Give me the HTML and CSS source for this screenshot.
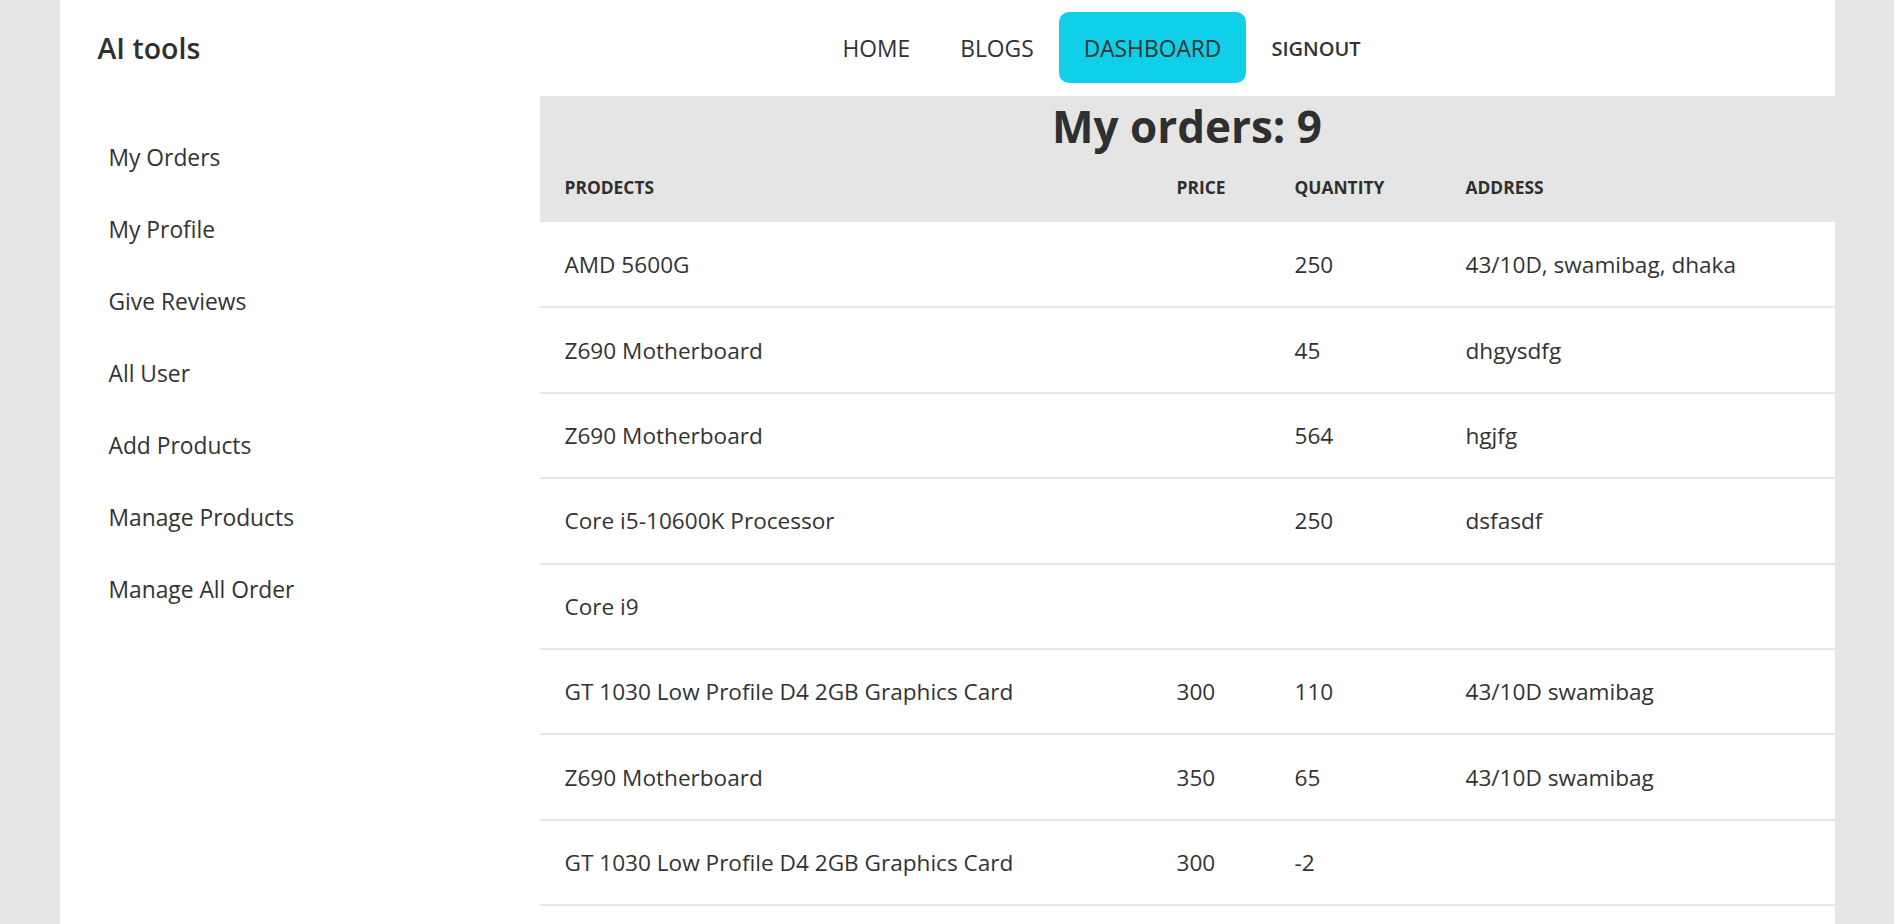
FILE: index.html
```html
<!DOCTYPE html>
<html lang="en">
<head>
<meta charset="utf-8">
<title>AI tools - Dashboard</title>
<link rel="stylesheet" href="styles.css">
</head>
<body>
<div class="page">
  <header class="topbar">
    <div class="brand">AI tools</div>
    <nav class="nav">
      <a class="nav-link" href="#">HOME</a>
      <a class="nav-link" href="#">BLOGS</a>
      <a class="nav-link active" href="#">DASHBOARD</a>
      <a class="nav-link signout" href="#">SIGNOUT</a>
    </nav>
  </header>
  <div class="layout">
    <aside class="sidebar">
      <ul class="side-menu">
        <li><a href="#">My Orders</a></li>
        <li><a href="#">My Profile</a></li>
        <li><a href="#">Give Reviews</a></li>
        <li><a href="#">All User</a></li>
        <li><a href="#">Add Products</a></li>
        <li><a href="#">Manage Products</a></li>
        <li><a href="#">Manage All Order</a></li>
      </ul>
    </aside>
    <main class="main">
      <div class="orders-head">
        <h1 class="orders-title">My orders: 9</h1>
      </div>
      <table class="orders">
        <thead>
          <tr>
            <th class="col-product">PRODECTS</th>
            <th class="col-price">PRICE</th>
            <th class="col-qty">QUANTITY</th>
            <th class="col-address">ADDRESS</th>
          </tr>
        </thead>
        <tbody>
          <tr><td>AMD 5600G</td><td></td><td>250</td><td>43/10D, swamibag, dhaka</td></tr>
          <tr><td>Z690 Motherboard</td><td></td><td>45</td><td>dhgysdfg</td></tr>
          <tr><td>Z690 Motherboard</td><td></td><td>564</td><td>hgjfg</td></tr>
          <tr><td>Core i5-10600K Processor</td><td></td><td>250</td><td>dsfasdf</td></tr>
          <tr><td>Core i9</td><td></td><td></td><td></td></tr>
          <tr><td>GT 1030 Low Profile D4 2GB Graphics Card</td><td>300</td><td>110</td><td>43/10D swamibag</td></tr>
          <tr><td>Z690 Motherboard</td><td>350</td><td>65</td><td>43/10D swamibag</td></tr>
          <tr><td>GT 1030 Low Profile D4 2GB Graphics Card</td><td>300</td><td>-2</td><td></td></tr>
        </tbody>
      </table>
    </main>
  </div>
</div>
</body>
</html>
```
FILE: styles.css
```css
* { box-sizing: border-box; }

html, body {
  margin: 0;
  padding: 0;
}

body {
  background: #e5e5e5;
  font-family: "Open Sans", "Noto Sans", sans-serif;
  color: #333333;
  overflow: hidden;
}

a { color: inherit; text-decoration: none; }

.page {
  width: 1775px;
  margin: 0 auto;
  background: #ffffff;
  min-height: 100vh;
}

/* top bar */
.topbar {
  display: flex;
  align-items: flex-start;
  height: 96px;
  padding-top: 12px;
}

.brand {
  width: 480px;
  padding-left: 38px;
  padding-top: 1px;
  font-size: 28.5px;
  font-weight: 600;
  line-height: 71px;
  color: #2f2f2f;
}

.nav {
  display: flex;
  margin-left: 278px;
}

.nav-link {
  display: flex;
  align-items: center;
  height: 71px;
  padding: 1px 25px 0;
  font-size: 22.8px;
  color: #333333;
  border-radius: 10px;
}

.nav-link.active {
  background: #0fcfe9;
}

.nav-link.signout {
  font-size: 20px;
  font-weight: 600;
}

/* layout */
.layout {
  display: flex;
}

.sidebar {
  width: 480px;
  flex: none;
}

.side-menu {
  list-style: none;
  margin: 0;
  padding: 25px 0 0 49px;
}

.side-menu li {
  height: 72px;
  display: flex;
  align-items: center;
  font-size: 22.8px;
  color: #333333;
}

.main {
  flex: 1;
  min-width: 0;
}

.orders-head {
  background: #e5e5e5;
  padding-top: 4px;
}

.orders-title {
  margin: 0;
  text-align: center;
  font-size: 44px;
  font-weight: 700;
  line-height: 52px;
  color: #2f2f2f;
}

.orders {
  width: 100%;
  border-collapse: collapse;
  table-layout: fixed;
}

.orders thead tr {
  background: #e5e5e5;
}

.orders th {
  height: 70px;
  padding: 0 25px;
  text-align: left;
  font-size: 17.4px;
  font-weight: 700;
  color: #2f2f2f;
  vertical-align: middle;
}

.col-product { width: 612px; }
.col-price { width: 118px; }
.col-qty { width: 171px; }
.col-address { width: auto; }

.orders td {
  height: 85.4px;
  padding: 0 25px;
  font-size: 22.6px;
  color: #333333;
  border-bottom: 2px solid #e5e5e5;
  vertical-align: middle;
  white-space: nowrap;
}
```
